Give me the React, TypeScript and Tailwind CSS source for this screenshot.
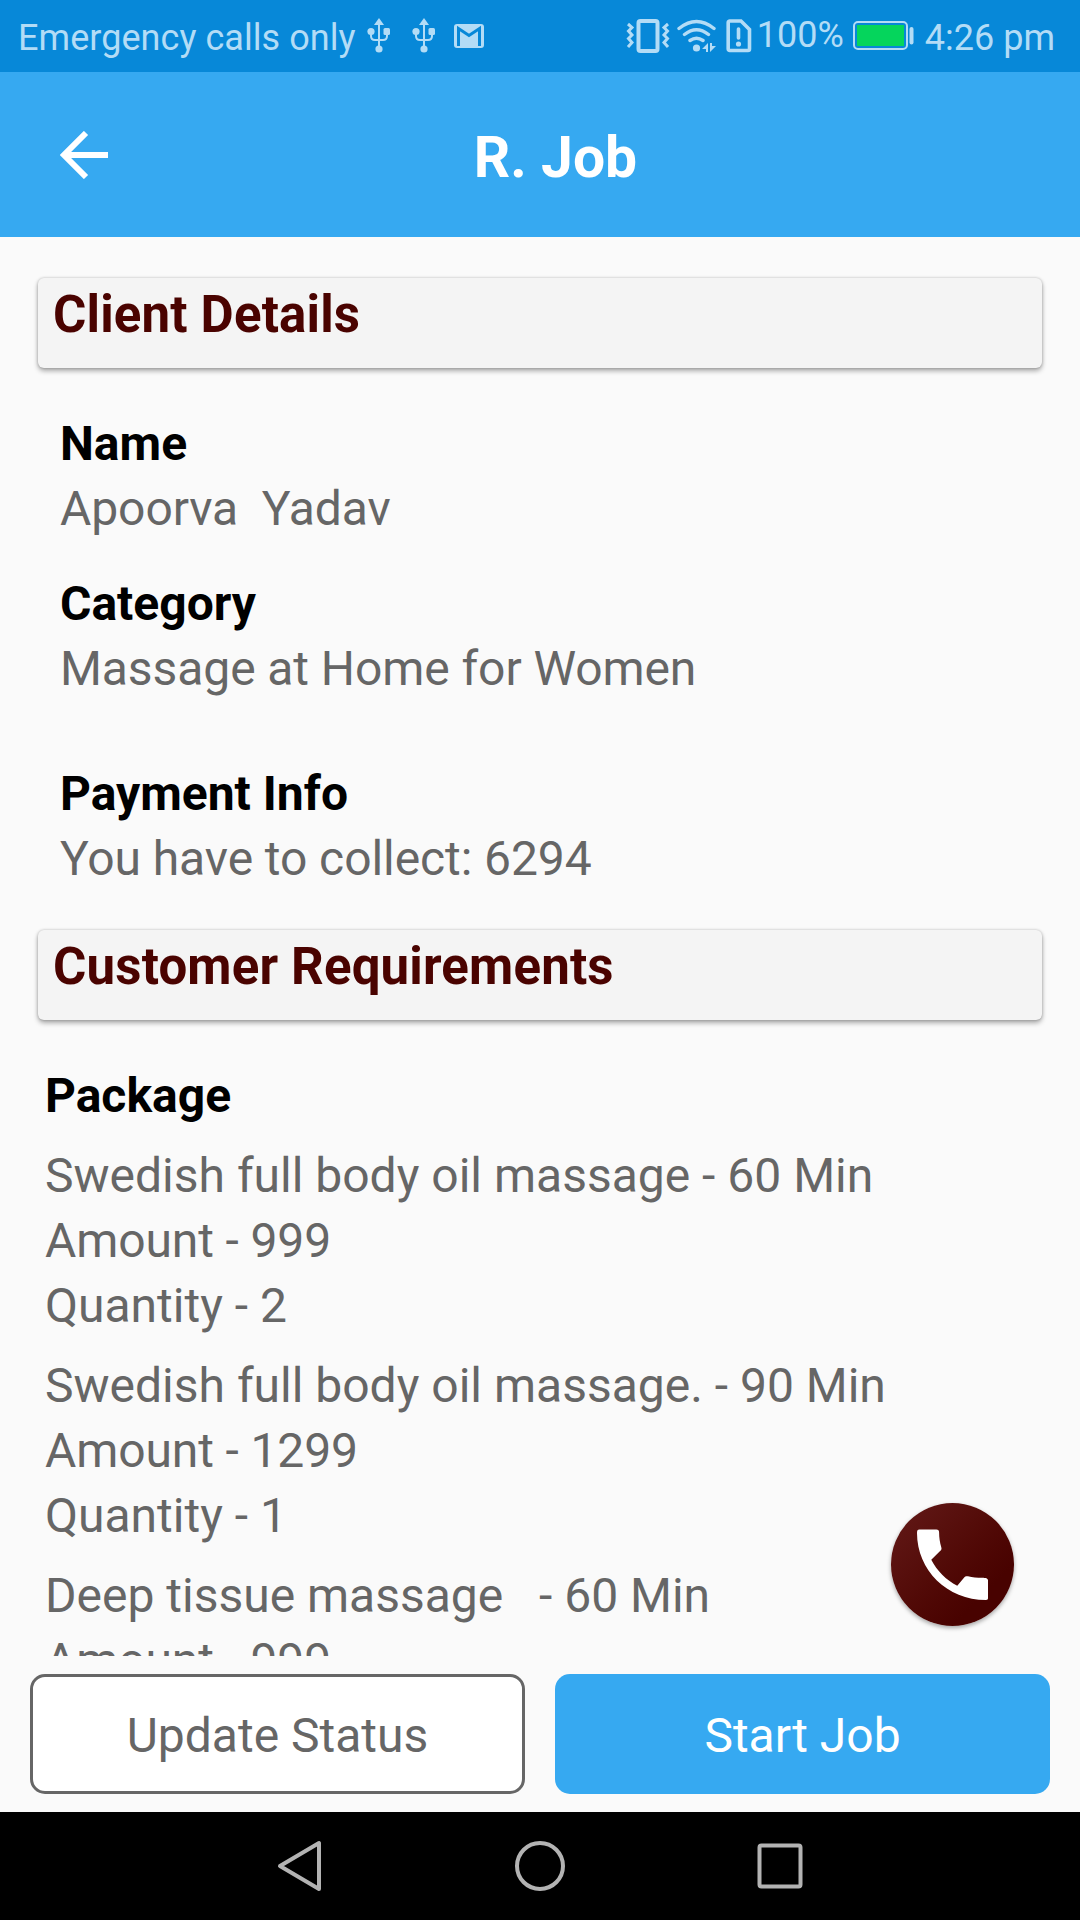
import type { ReactNode } from "react";

type Field = { label: string; value: string; className: string };
type Package = { title: string; amount: number; quantity?: number };

const FIELDS: Field[] = [
  { label: "Name", value: "Apoorva  Yadav", className: "pt-[43px]" },
  { label: "Category", value: "Massage at Home for Women", className: "pt-[30px]" },
  { label: "Payment Info", value: "You have to collect: 6294", className: "pt-[60px]" },
];

const PACKAGES: Package[] = [
  { title: "Swedish full body oil massage - 60 Min", amount: 999, quantity: 2 },
  { title: "Swedish full body oil massage. - 90 Min", amount: 1299, quantity: 1 },
  { title: "Deep tissue massage   - 60 Min", amount: 999 },
];

function UsbIcon() {
  return (
    <svg width="24" height="36" viewBox="0 0 24 36" fill="none" stroke="currentColor" strokeWidth="2">
      <path d="M12 6v25M4 13v5q0 4 4 4h8q4 0 4-4v-5" />
      <path d="M12 0l5 7H7z" fill="currentColor" stroke="none" />
      <circle cx="12" cy="31" r="3.6" fill="currentColor" stroke="none" />
      <circle cx="4" cy="13.5" r="3.6" fill="currentColor" stroke="none" />
      <rect x="16.500" y="10" width="6.500" height="7" rx="1.500" fill="currentColor" stroke="none" />
    </svg>
  );
}

function MailIcon() {
  return (
    <svg width="32" height="26" viewBox="0 0 32 26" fill="none">
      <rect x="1" y="1" width="30" height="24" rx="3" fill="currentColor" />
      <path d="M5.5 23V5.500L16 12.500l10.500-7V23" stroke="#0788d8" strokeWidth="3" />
    </svg>
  );
}

function VibrateIcon() {
  return (
    <svg width="44" height="36" viewBox="0 0 44 36" fill="none" stroke="currentColor" strokeWidth="3">
      <rect x="12.500" y="3" width="19" height="30" rx="2" strokeWidth="4" />
      <path d="M2 6l4 3.500-3.500 3.500 3.500 4-3.500 3.500 3.500 4-4 4.500M42 6l-4 3.500 3.500 3.500-3.500 4 3.500 3.500-3.500 4 4 4.500" />
    </svg>
  );
}

function WifiIcon() {
  return (
    <svg width="40" height="34" viewBox="0 0 40 34" fill="none" stroke="currentColor" strokeWidth="3.4" strokeLinecap="round">
      <path d="M2 9.500q17.500-14 35 0M7.500 15.500q12-9.500 24 0M13 21.500q6.500-4.500 13 0" />
      <circle cx="19.5" cy="29" r="3.600" fill="currentColor" stroke="none" />
      <path d="M31 24v9h-2v-3h-4zM33 24v9l6-6h-4v-3z" fill="currentColor" stroke="none" />
    </svg>
  );
}

function SimAlertIcon() {
  return (
    <svg width="26" height="34" viewBox="0 0 26 34" fill="none" stroke="currentColor">
      <path
        d="M4 2h11l8.500 8.500V30a1.500 1.500 0 0 1-1.500 1.500H4A1.500 1.500 0 0 1 2.200 30V3.500A1.500 1.500 0 0 1 4 2z"
        strokeWidth="3.6"
      />
      <path d="M12.500 10v9" strokeWidth="3.6" strokeLinecap="round" />
      <circle cx="12.5" cy="25" r="2.6" fill="currentColor" stroke="none" />
    </svg>
  );
}

function BatteryIcon() {
  return (
    <svg width="62" height="30" viewBox="0 0 62 30" fill="none">
      <rect x="1" y="1" width="53" height="27" rx="4" stroke="currentColor" strokeWidth="2" />
      <rect x="4" y="4" width="47" height="21" fill="#05d55c" />
      <rect x="56.5" y="6" width="4" height="17.5" rx="2" fill="currentColor" />
    </svg>
  );
}

function StatusBar() {
  return (
    <div className="flex h-[72px] shrink-0 items-center bg-[#0788d8] pl-[18px] text-[36px] leading-none whitespace-nowrap text-[#b3dcf6]">
      <span className="pt-[3px] tracking-[0.05px]">Emergency calls only</span>
      <div className="ml-[11px] flex items-center">
        <UsbIcon />
        <div className="ml-[21px]">
          <UsbIcon />
        </div>
        <div className="ml-[17px]">
          <MailIcon />
        </div>
      </div>
      <div className="mr-[25px] ml-auto flex items-center">
        <VibrateIcon />
        <div className="ml-[7px]">
          <WifiIcon />
        </div>
        <div className="ml-[9px]">
          <SimAlertIcon />
        </div>
        <span className="ml-[5px] pb-[3px]">100%</span>
        <div className="ml-[9px]">
          <BatteryIcon />
        </div>
        <span className="ml-[10px] pt-[3px]">4:26 pm</span>
      </div>
    </div>
  );
}

function Header() {
  return (
    <header className="flex h-[165px] shrink-0 items-center bg-[#36a9f1] pr-[77px] pl-[60px] text-white">
      <svg width="48" height="48" viewBox="0 0 48 48" fill="none" stroke="currentColor" strokeWidth="6">
        <path d="M48 24H4M26 2L4 24l22 22" />
      </svg>
      <h1 className="flex-1 pt-[5px] text-center text-[57px] leading-none font-bold">R. Job</h1>
    </header>
  );
}

function SectionCard({ children }: { children: ReactNode }) {
  return (
    <div className="mx-[38px] h-[90px] rounded-md bg-[#f4f4f4] pt-[7px] pl-[15px] shadow-[0_3px_5px_rgba(0,0,0,0.32),0_0_3px_rgba(0,0,0,0.22)]">
      <h2 className="text-[51px] leading-[60px] font-bold tracking-[0.17px] text-[#4a0300]">{children}</h2>
    </div>
  );
}

function NavBar() {
  return (
    <nav className="flex h-[108px] shrink-0 items-center justify-center bg-black text-[#b3b3b3]">
      <svg width="540" height="52" viewBox="0 0 540 52" fill="none" stroke="currentColor" strokeWidth="4" strokeLinejoin="round">
        <path d="M10 26L49 3v46z" />
        <circle cx="270" cy="26" r="23" />
        <rect x="489.5" y="5.5" width="41" height="41" rx="2" />
      </svg>
    </nav>
  );
}

export default function App() {
  return (
    <div className="relative flex h-[1920px] w-[1080px] flex-col overflow-hidden bg-[#fafafa] font-[Roboto,sans-serif] text-[48px] leading-[65px] text-[#666]">
      <StatusBar />
      <Header />

      <main className="h-[1419px] shrink-0 overflow-hidden pt-[41px]">
        <SectionCard>Client Details</SectionCard>
        <div className="px-[60px]">
          {FIELDS.map((field) => (
            <div key={field.label} className={field.className}>
              <div className="font-bold text-black">{field.label}</div>
              <div className="tracking-[-0.08px] whitespace-pre">{field.value}</div>
            </div>
          ))}
        </div>

        <div className="pt-[39px]">
          <SectionCard>Customer Requirements</SectionCard>
        </div>
        <div className="px-[45px] pt-[43px]">
          <div className="font-bold text-black">Package</div>
          {PACKAGES.map((item) => (
            <div key={item.title} className="pt-[15px] whitespace-pre">
              <div>{item.title}</div>
              <div className="tracking-[-0.12px]">Amount - {item.amount}</div>
              {item.quantity && <div>Quantity - {item.quantity}</div>}
            </div>
          ))}
        </div>
      </main>

      <footer className="grid h-[156px] shrink-0 grid-cols-2 gap-[30px] px-[30px] py-[18px]">
        <button className="rounded-[15px] border-3 border-[#666] bg-white pt-[2px]">Update Status</button>
        <button className="rounded-[15px] bg-[#36a9f1] pt-[2px] text-white">Start Job</button>
      </footer>

      <NavBar />

      {/* Floating call button */}
      <button className="absolute top-[1503px] left-[891px] flex size-[123px] items-center justify-center rounded-full bg-linear-to-br from-[#5e1513] from-15% to-[#480200] to-75% shadow-[0_2px_4px_rgba(0,0,0,0.35)]">
        <svg width="71" height="71" viewBox="3 3 18 18" fill="white">
          <path d="M6.620 10.790c1.440 2.830 3.760 5.140 6.590 6.590l1.700-2.050c.3-.35.6-.42 1.020-.34 1.120.27 2.330.37 3.570.37.95 0 1.500.15 1.500.7V20.500c0 .35-.15.5-.5.500C10.610 21 3 13.390 3 4c0-.65.150-.900.600-.900h4.300c.5 0 .700.250.700.700 0 1.350.200 2.650.57 3.870.11.35.03.620-.25.870z" />
        </svg>
      </button>
    </div>
  );
}
